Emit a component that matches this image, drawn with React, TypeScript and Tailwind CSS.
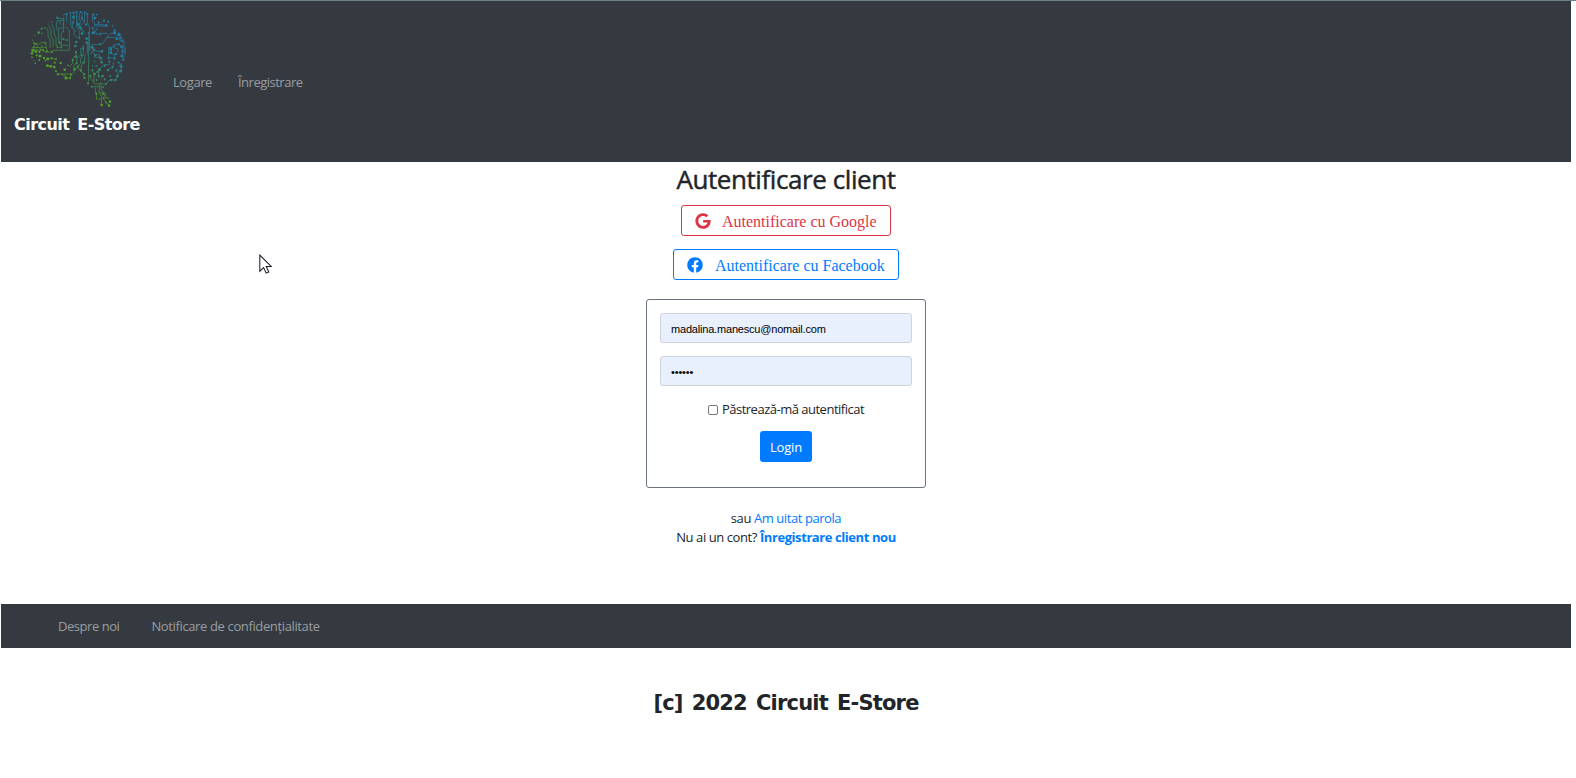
import React from "react";

const traces: string[] = [
  // left lobe
  "M100 132H118L124 127H138V144",
  "M96 143H140V150",
  "M95 150H128L134 156H158",
  "M112 137V143M126 134V143",
  "M138 82L144 92V108L150 118V144",
  "M146 78L153 88V108L159 118V142",
  "M155 72L162 86V100L168 112V137H174",
  "M170 62V88L176 95V128L184 136H205",
  "M170 56H190V84H176V94",
  "M190 70V94L184 100V120",
  "M194 82H200L208 92V151H158",
  "M180 75V62H194",
  "M190 116L184 122V142H172",
  // top middle
  "M188 46L200 40V66",
  "M212 38V78L222 90V104L232 114",
  "M222 36V60L217 66V84L229 96",
  "M230 36V82L238 92V112",
  "M238 38V58L232 64V76L246 94V102",
  "M246 36V58L240 66V80L252 94V100",
  "M254 38V66L246 74",
  "M262 40V72L268 80V152",
  "M266 106V244",
  "M262 128V160L254 168V188",
  // right lobe
  "M278 44V62L286 74H312",
  "M284 70V78H324M290 52L282 60",
  "M278 84L288 96V104L300 100H322",
  "M272 134H306L320 112H348",
  "M320 112L332 100H342",
  "M348 108L360 104V122",
  "M352 120L362 112",
  "M324 142H340V134H356L366 140V172L374 178",
  "M326 142V174H344V162",
  "M334 150V162H352",
  "M344 146H354V158",
  "M360 124H372V174",
  "M376 142V164",
  "M272 152L284 160V172H300L306 186",
  "M284 164H298V178",
  "M280 146L292 154H306",
  "M298 208L312 194H328V184",
  "M326 208L340 198V186",
  "M356 200L364 190V214",
  "M334 240H346L354 228V216",
  "M268 228L284 252H318L328 240",
  "M274 210L282 220V246",
  "M296 206V226L306 236",
  // lower left
  "M170 222H212V234H198",
  "M184 222L202 232",
  "M228 152V166L218 176V190L208 200",
  "M242 144V164L230 178V188L222 196V220",
  "M250 134V164L242 176V190L230 202",
  "M254 188L244 196V214L252 222V236",
  "M228 202L242 210",
  "M142 178L154 174L166 178",
  "M142 198H156L166 206",
  // stem
  "M272 260H310",
  "M286 262V274L290 284V300",
  "M298 254V278L304 288V314",
  "M304 260V270L316 280V286",
  "M298 278H310L318 294H328",
  "M310 296L318 306L326 316",
];

const STEM_TRACES = 6;

const dots: [number, number, number][] = [
  [125, 86, 4], [116, 98, 5], [155, 66, 3], [146, 72, 2], [134, 84, 3], [104, 106, 2], [98, 120, 2],
  [107, 132, 4], [102, 128, 3], [136, 130, 3], [126, 100, 3],
  [102, 140, 3], [99, 151, 6], [96, 160, 5], [108, 155, 5], [118, 156, 4], [122, 149, 3], [130, 151, 4], [141, 154, 4],
  [156, 156, 4], [110, 166, 4], [120, 168, 6], [96, 172, 3], [102, 182, 2], [106, 190, 3], [118, 180, 4], [132, 174, 5],
  [143, 177, 6], [136, 182, 3], [155, 175, 4], [168, 177, 4], [142, 197, 5], [152, 199, 5], [163, 201, 5], [164, 188, 4], [182, 189, 5],
  [168, 214, 4], [174, 223, 4], [198, 234, 6], [210, 235, 4], [214, 223, 4], [194, 209, 5], [224, 208, 5], [204, 196, 3],
  [172, 53, 4], [176, 62, 3], [191, 56, 3], [200, 42, 4], [191, 72, 3], [210, 38, 3], [220, 38, 4], [230, 36, 4], [242, 36, 4],
  [254, 38, 4], [262, 42, 4], [220, 52, 5], [230, 50, 3], [246, 54, 4], [235, 73, 5], [241, 83, 5], [220, 68, 3],
  [252, 62, 3], [258, 74, 4], [266, 100, 4], [246, 101, 5], [260, 116, 5], [260, 128, 5], [229, 126, 5], [226, 138, 5], [238, 114, 4],
  [190, 94, 3], [191, 117, 4], [200, 120, 4], [179, 128, 4], [171, 143, 3], [185, 143, 3], [228, 157, 4], [249, 145, 4], [246, 166, 4],
  [228, 170, 5], [218, 180, 4], [250, 188, 4], [230, 190, 4], [234, 200, 4], [242, 212, 4], [252, 222, 4], [254, 234, 4], [264, 250, 4],
  [280, 44, 4], [290, 44, 3], [284, 54, 5], [296, 68, 4], [312, 62, 4], [325, 65, 4], [318, 76, 5], [338, 78, 3], [344, 90, 4],
  [344, 98, 6], [357, 103, 6], [350, 116, 5], [362, 113, 4], [280, 98, 6], [290, 88, 3], [300, 104, 3], [278, 84, 4],
  [300, 132, 4], [276, 142, 6], [282, 150, 5], [306, 154, 5], [303, 174, 5], [305, 187, 5], [286, 166, 4], [274, 160, 3],
  [367, 121, 4], [356, 132, 4], [344, 140, 3], [332, 147, 5], [332, 158, 5], [348, 162, 4], [326, 174, 4], [344, 176, 4],
  [365, 140, 5], [368, 154, 4], [365, 168, 5], [369, 180, 4], [356, 188, 4], [364, 200, 5], [362, 213, 6], [349, 212, 4],
  [352, 228, 5], [346, 240, 5], [333, 240, 5], [330, 228, 4], [338, 202, 4], [324, 210, 5], [314, 198, 4], [328, 184, 4],
  [289, 198, 4], [299, 209, 5], [292, 216, 4], [284, 222, 5], [272, 228, 4], [296, 229, 4], [308, 228, 5], [314, 238, 4],
  [290, 240, 4], [302, 250, 3], [318, 252, 4], [278, 210, 4], [284, 184, 3], [278, 198, 3],
  [276, 261, 3], [289, 281, 4], [310, 262, 3], [309, 282, 4], [298, 297, 3], [311, 294, 4], [330, 305, 5], [305, 315, 5], [327, 317, 5], [318, 308, 3],
];

function BrainLogo() {
  return (
    <svg viewBox="84 27 303 303" className="ml-[14px] block h-[101px] w-[101px]" aria-hidden="true">
      <defs>
        <linearGradient id="brain" gradientUnits="userSpaceOnUse" x1="155" y1="250" x2="295" y2="95">
          <stop offset="0" stopColor="#5ba31a" />
          <stop offset="0.28" stopColor="#4d9a2f" />
          <stop offset="0.65" stopColor="#2c8478" />
          <stop offset="1" stopColor="#227da7" />
        </linearGradient>
        <linearGradient id="stem" gradientUnits="userSpaceOnUse" x1="0" y1="235" x2="0" y2="290">
          <stop offset="0" stopColor="#2f8570" />
          <stop offset="1" stopColor="#4c9c2e" />
        </linearGradient>
      </defs>
      <g fill="none" strokeWidth="2.7" opacity="0.82">
        {traces.map((d, i) => (
          <path key={i} d={d} stroke={i >= traces.length - STEM_TRACES ? "url(#stem)" : "url(#brain)"} />
        ))}
      </g>
      {dots.map(([x, y, r], i) => (
        <circle key={i} cx={x} cy={y} r={r * 0.8} fill={y > 256 ? "url(#stem)" : "url(#brain)"} />
      ))}
    </svg>
  );
}

function GoogleIcon() {
  return (
    <svg viewBox="0 0 488 512" className="h-[16px] w-[16px]" fill="currentColor" aria-hidden="true">
      <path d="M488 261.8C488 403.3 391.1 504 248 504 110.8 504 0 393.2 0 256S110.8 8 248 8c66.8 0 123 24.5 166.3 64.9l-67.5 64.9C258.5 52.6 94.3 116.6 94.3 256c0 86.5 69.1 156.6 153.7 156.6 98.2 0 135-70.4 140.8-106.9H248v-85.3h236.1c2.3 12.7 3.9 24.9 3.9 41.4z" />
    </svg>
  );
}

function FacebookIcon() {
  return (
    <svg viewBox="0 0 512 512" className="h-[16px] w-[16px]" fill="currentColor" aria-hidden="true">
      <path d="M504 256C504 119 393 8 256 8S8 119 8 256c0 123.78 90.69 226.38 209.25 245V327.69h-63V256h63v-54.64c0-62.15 37-96.48 93.67-96.48 27.14 0 55.52 4.84 55.52 4.84v61h-31.28c-30.8 0-40.41 19.12-40.41 38.73V256h68.78l-11 71.69h-57.78V501C413.31 482.38 504 379.78 504 256z" />
    </svg>
  );
}

export default function App() {
  return (
    <div className="relative h-[778px] w-[1576px] overflow-hidden border-t border-[#6b7f87] bg-white font-['Open_Sans','Noto_Sans',sans-serif] text-[13px] leading-[19px] tracking-[-0.42px] text-[#212529]">
      <nav className="ml-px flex h-[161px] w-[1570px] items-start bg-[#343a40] text-[#9a9da0]">
        <a href="#" className="ml-[13px] mt-[8px] block w-[128px] text-white no-underline">
          <BrainLogo />
          <span className="mt-[5px] block whitespace-nowrap font-['DejaVu_Sans',sans-serif] text-[16px] font-bold leading-[20px] tracking-[-0.55px] [word-spacing:3px]">Circuit E-Store</span>
        </a>
        <a href="#" className="ml-[31px] mt-[72px]">Logare</a>
        <a href="#" className="ml-[26px] mt-[72px] tracking-[-0.5px]">Înregistrare</a>
      </nav>

      <main className="ml-px flex h-[442px] w-[1570px] flex-col items-center">
        <h2 className="flex h-[34px] items-center whitespace-nowrap text-[26px] font-medium leading-[34px] tracking-[-0.42px] [-webkit-text-stroke:0.45px_#212529]">Autentificare client</h2>
        <button className="mt-[9px] flex h-[31px] w-[210px] items-center rounded-[3px] border border-[#dc3545] pl-[13px] font-['Liberation_Serif',serif] text-[16px] tracking-normal text-[#dc3545]">
          <GoogleIcon />
          <span className="ml-[11px] whitespace-nowrap pt-[2px]">Autentificare cu Google</span>
        </button>
        <button className="mt-[13px] flex h-[31px] w-[226px] items-center rounded-[3px] border border-[#007bff] pl-[13px] font-['Liberation_Serif',serif] text-[16px] tracking-normal text-[#007bff]">
          <FacebookIcon />
          <span className="ml-[12px] whitespace-nowrap pt-px">Autentificare cu Facebook</span>
        </button>

        <form className="mt-[19px] flex h-[189px] w-[280px] flex-col items-center rounded-[3px] border border-[#6c757d] px-[13px] pt-[13px]">
          <input
            type="email"
            defaultValue="madalina.manescu@nomail.com"
            className="h-[30px] w-full rounded-[3px] border border-[#ced4da] bg-[#e8f0fe] px-[10px] pt-px font-['Liberation_Sans',sans-serif] text-[11px] tracking-[-0.19px] text-black"
          />
          <input
            type="password"
            defaultValue="parola"
            className="mt-[13px] h-[30px] w-full rounded-[3px] border border-[#ced4da] bg-[#e8f0fe] px-[10px] pt-[2px] font-['Liberation_Sans',sans-serif] text-[11px] tracking-[-0.15px] text-black"
          />
          <label className="mt-[14px] flex h-[19px] items-center whitespace-nowrap tracking-[-0.5px]">
            <input type="checkbox" className="mr-[4px] h-[10px] w-[10px] appearance-none rounded-[2px] border border-[#767676] bg-white" />
            Păstrează-mă autentificat
          </label>
          <button type="button" className="mt-[12px] h-[31px] w-[52px] rounded-[3px] bg-[#007bff] pt-px tracking-[-0.2px] text-white">Login</button>
        </form>

        <div className="mt-[21px] text-center">
          <p className="whitespace-nowrap">sau <a href="#" className="text-[#007bff]">Am uitat parola</a></p>
          <p className="whitespace-nowrap">Nu ai un cont? <a href="#" className="font-bold text-[#007bff]">Înregistrare client nou</a></p>
        </div>
      </main>

      <nav className="ml-px flex h-[44px] w-[1570px] items-center bg-[#343a40] pl-[57px] text-[#9a9da0]">
        <a href="#" className="whitespace-nowrap tracking-[-0.45px]">Despre noi</a>
        <a href="#" className="ml-[32px] whitespace-nowrap tracking-[-0.37px]">Notificare de confidențialitate</a>
      </nav>

      <footer className="ml-px mt-[42px] w-[1570px] whitespace-nowrap text-center font-['DejaVu_Sans',sans-serif] text-[21px] font-bold leading-[26px] tracking-[-0.8px] [word-spacing:2.5px]">
        [c] 2022 Circuit E-Store
      </footer>

      <svg viewBox="0 0 12 19" className="absolute left-[259px] top-[253px] h-[20px] w-[13px]" aria-hidden="true">
        <path d="M.6 1v15.3l3.6-3.4 2.4 5.3 2.5-1.1-2.4-5.2h4.9z" fill="#fff" stroke="#1c1c28" strokeWidth="1" />
      </svg>
    </div>
  );
}
